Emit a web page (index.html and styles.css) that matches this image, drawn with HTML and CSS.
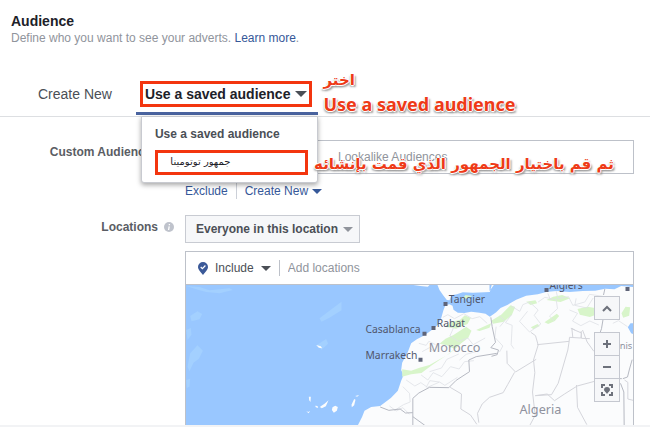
FILE: index.html
```html
<!DOCTYPE html>
<html lang="en">
<head>
<meta charset="utf-8">
<title>Audience</title>
<link rel="stylesheet" href="styles.css">
</head>
<body>
<header class="intro">
  <h1>Audience</h1>
  <p>Define who you want to see your adverts. <a href="#">Learn more</a>.</p>
</header>
<nav class="tabs">
  <button class="tab" type="button">Create New</button>
  <div class="tab-wrap">
    <button class="tab active" type="button"><span class="marked">Use a saved audience <i class="caret"></i></span></button>
    <div class="menu">
      <strong>Use a saved audience</strong>
      <button class="menu-item" type="button" lang="ar" dir="rtl">جمهور توتومينا</button>
    </div>
  </div>
  <div class="note">
    <span class="note-ar" lang="ar" dir="rtl">اختر</span>
    <span>Use a saved audience</span>
  </div>
</nav>
<main class="form">
  <div class="label custom-label"><label for="custom">Custom Audiences</label>
    <svg class="info" viewBox="0 0 10 10" aria-hidden="true"><circle cx="5" cy="5" r="5" fill="#bfc3cc"/><path d="M5.4 2v1.2M5.2 4.4 4.6 8" stroke="#fff" stroke-width="1.3"/></svg>
  </div>
  <div class="field">
    <div class="custom-box">
      <input id="custom" type="text" placeholder="Lookalike Audiences">
      <p class="note note-ar note-second" lang="ar" dir="rtl">ثم قم باختيار الجمهور الذي قمت بإنشائه</p>
    </div>
    <div class="links"><a href="#">Exclude</a><a class="create" href="#">Create New <i class="caret small"></i></a></div>
  </div>
  <div class="label loc-label">Locations
    <svg class="info" viewBox="0 0 10 10" aria-hidden="true"><circle cx="5" cy="5" r="5" fill="#bfc3cc"/><path d="M5.4 2v1.2M5.2 4.4 4.6 8" stroke="#fff" stroke-width="1.3"/></svg>
  </div>
  <div class="field">
    <button class="scope" type="button">Everyone in this location <i class="caret small"></i></button>
    <div class="locations">
      <div class="loc-bar">
        <button class="include" type="button">
          <svg class="pin" viewBox="0 0 10 13" aria-hidden="true"><path d="M5 0a5 5 0 0 1 5 5c0 3-3 5-5 8C3 10 0 8 0 5a5 5 0 0 1 5-5z" fill="#3b5998"/><path d="m2.7 5 1.7 1.7 3-3.2" fill="none" stroke="#fff" stroke-width="1.2"/></svg>
          Include <i class="caret small"></i>
        </button>
        <input type="text" placeholder="Add locations" aria-label="Add locations">
      </div>
      <div class="map">
        <svg class="map-art" viewBox="-432 15 1344 420" preserveAspectRatio="xMidYMid slice" role="img" aria-label="Map of Morocco and Algeria">
          <rect x="-1000" y="-500" width="3000" height="1500" fill="#99c7ff"/>
          <g fill="#a3d0ff">
            <path d="M-430 18l40 3 30 10 60-6 10 5-40 10-40-4-30-8zM-418 108l22-14 14 8-8 16-24 6zM-430 150l14-6 2 20-12 16zM-426 260l8-40 22-24 16 16-12 24-16 12-12 26zM-430 300l12-4-2 24-8 4zM-30 115l40-30 26-20v26l-36 22-24 12z"/>
            <path d="M-38 195l28-18 6 14-20 18z"/>
          </g>
          <g fill="#fbfcfd">
            <path d="M85 436 98 410 105 392 125 381 152 378 184 354 205 332 215 302 222 286 215 270 218 248 235 216 245 190 262 178 285 166 308 149 325 135 335 115 342 90 348 75 360 73 369 77 372 89 385 98 405 99 425 95 450 98 468 101 481 110 500 97 513 84 535 74 560 59 590 47 625 43 650 36 680 33 720 36 760 33 797 32 827 26 855 28 875 18 912 21 930 24V128L903 130 895 142 905 160 930 170V450H80z"/>
            <path d="M322 10 330 30 341 46 352 60 360 61 366 46 382 43 400 37 430 38 481 36 488 10zM245 14l28 4 22 2 6-6zM480 15h13l-7 10-6 8z"/>
            <path d="M-40 195l14 4 4 6-10-2zM-62 350l6 0-1 16-4-5zM-25 378l10-7 12-10-8 18-12 6-6-4zM9 382l8-5 8 4-3 11-9 6-6-8zM-43 377l7 1 2 6-7-2zM-70 393l6 3 6-3-5 7zM66 374l8-17 4 2-4 17-7 6zM77 348l12-3-6 5z"/>
          </g>
          <g fill="#d8f5ca">
            <path d="M218 268 245 272 270 263 300 255 325 241 350 227 375 207 352 196 330 191 348 176 372 165 395 150 410 140 426 152 416 174 395 190 377 207 358 222 330 240 307 256 276 279 245 283 218 290zM345 140l22-15 25-6 14-13 18 8-10 18-34 14zM440 150l45-20-5 13-30 10zM398 56l10-11 20 3-10 7z"/>
            <path d="M485 122l30-18 28-28 14 5-10 24-24 20-32 6zM590 65l28-4 5 9-20 5zM651 60l20-10 27-5 24 10-29 11zM744 87l29-7 24 4 2 20-18 7-30-7zM645 127l37-26 7 7-13 15-20 9zM604 142l20-10 7 6-19 10zM876 100l12-20 14 2-3 25-18 6z"/>
          </g>
          <g fill="none" stroke="#e0e2e7" stroke-width="2.5" stroke-linejoin="round">
            <path d="M340 112l15-8 20 12 28-15 25 15 23-6 22 20M355 126l16 20-10 22 26 16 28-10 16 20 36-20M268 190l22 6 8-12 20 10M278 215l22-12 12 10M220 320l20 20 2 26-20 8-28 18M230 300l26 18 18-10 20 14 36-16 16 10 38-24M275 285l20 15 16-22 26 12 26-30 26 7 16-22 28-3M300 275l36-11 16-26 36-16M390 240l20-17 36-10M290 322l11-20 28 4M180 378l20 15 20-10 20 20"/>
            <path d="M510 108l16 14-15 18M545 78l26 16 9-20 20-8 26 24-12 16 20 26-34 24-30-32 24-30M546 104l-18 24 20 8-3 58 8 12M500 140l-4 32 24 26-10 18M626 66l20-14 34 7 4 27-24 22 14 15M655 40l8 20M680 33l5 23 32-6 13 26 36-10 14-23 40 6M720 90l24 10-15 23 25 14 27-14 27 12M740 55l-4 21 36 8 19-30M824 80l18-22 18 11M850 130l17-8 27 18"/>
          </g>
          <g fill="none" stroke="#d4d5db" stroke-width="3" stroke-linejoin="round">
            <path d="M532 212l1 38 25 26 62-38M612 240l14-45-8-28-14-10M623 194l96-10 1-12 34 2 2-15-32-14M719 184l-4 26-29 100-20 34-48 3M612 240l4 38-7 58 8 70-16 30M555 277l-20 36-14 25-41 14M617 347l36-5 22 20 30-20 38-24 52-14M736 150l-9-5 3 28M755 153l1 22 25 1M759 150l14 36 20 28M741 315l3 67 28 52M480 352l-22 20-14 28 4 28M362 322l34 20-2 45 29 18 19 28M885 300l10 7v50l20 5"/>
          </g>
          <g fill="none" stroke="#b6b9c2" stroke-width="3" stroke-linejoin="round">
            <path d="M152 381l26 10 34-4 16 12 22-1M250 436v-81l18-16 32-17 58 1 22-22 40-26-2-35 22-10 62-10M250 410l36 26M484 112l4 28 10 47-14 16 23 7-4 14-17 5M822 45l4-18M808 205l-4-25 12-34 5-30M880 296l14-5 6-24 8-28M873 310l10 26 1 100M797 296h80"/>
          </g>
          <g fill="#5f6478"><path d="M342 66h12v12h-12zM306 138h12v12h-12zM279 155h12v12h-12zM267 233h12v12h-12zM645 24h12v12h-12zM888 21h12v12h-12z"/></g>
          <g class="city"><text x="358" y="70">Tangier</text><text x="322" y="141">Rabat</text><text x="108" y="158">Casablanca</text><text x="108" y="236">Marrakech</text><text x="660" y="27">Algiers</text></g>
          <g class="country"><text x="298" y="215">Morocco</text><text x="570" y="402">Algeria</text><text class="tunis" x="839" y="206">Tunis</text></g>
        </svg>
        <div class="controls">
          <button type="button" aria-label="Collapse map"><svg viewBox="0 0 24 22"><path d="m8 14 4-4 4 4"/></svg></button>
          <div class="zoom">
            <button type="button" aria-label="Zoom in"><svg viewBox="0 0 24 22"><path d="M8 11h8M12 7v8"/></svg></button>
            <button type="button" aria-label="Zoom out"><svg viewBox="0 0 24 22"><path d="M8 11h8"/></svg></button>
            <button type="button" aria-label="Drop pin"><svg viewBox="0 0 24 22"><path d="M7 9V6h3M14 6h3v3M17 13v3h-3M10 16H7v-3"/><path class="solid" d="M12 8a3 3 0 0 1 3 3c0 1-2 2-3 4-1-2-3-3-3-4a3 3 0 0 1 3-3z"/></svg></button>
          </div>
        </div>
      </div>
    </div>
  </div>
</main>
<footer class="strip"></footer>
</body>
</html>
```

FILE: styles.css
```css
* { box-sizing: border-box; }
body { margin: 0; background: #fff; color: #4b4f56; font: 12px/16px "Liberation Sans", Arial, sans-serif; }
button, input { font: inherit; color: inherit; margin: 0; }
button { padding: 0; border: 0; background: none; }
a { color: #365899; text-decoration: none; }

.intro { padding: 13px 11px 0; }
h1 { margin: 0; font-size: 14px; line-height: 16px; color: #1d2129; }
.intro p { margin: 0; line-height: 18px; color: #90949c; }

.tabs { display: flex; margin-top: 24px; padding-left: 14px; height: 46px; border-bottom: 1px solid #dddfe2; }
.tab { height: 44px; padding: 2px 24px 0; font-size: 14px; }
.tab-wrap { position: relative; margin-right: 5px; }
.tab.active { padding: 4px 6px 0 4px; border-bottom: 3px solid #4a64a0; font-weight: bold; color: #1d2129; }
.marked { display: flex; align-items: center; gap: 5px; height: 26px; padding: 0 2px; border: 3px solid #f3350f; white-space: nowrap; }
.caret { display: inline-block; border: 6px solid transparent; border-top-color: #4b4f56; border-bottom: 0; }
.caret.small { border-width: 5px; border-bottom: 0; }

.menu { position: absolute; z-index: 2; top: 45px; left: 5px; right: 0; padding: 9px 9px 7px 13px; background: #fff; border: 1px solid #c8cad0; border-radius: 0 0 3px 3px; box-shadow: 0 2px 5px rgba(0, 0, 0, .35); }
.menu strong { display: block; }
.menu-item { display: block; width: 100%; height: 25px; margin-top: 8px; padding: 0 75px 2px 0; border: 3px solid #f3350f; font: 10px/14px "DejaVu Sans", sans-serif; color: #1d2129; white-space: nowrap; text-align: right; }

.note { display: flex; flex-direction: column; align-items: flex-start; margin-top: -3px; font: bold 18px/24px "Noto Sans", "DejaVu Sans", sans-serif; color: #ee3a17; white-space: nowrap; text-shadow: 1px 0 #fff, -1px 0 #fff, 0 1px #fff, 0 -1px #fff, 2px 2px 2px #999, -1px 2px 2px #aaa; }
.note-ar { font: bold 15px/24px "DejaVu Sans", sans-serif; }
.note-second { position: absolute; z-index: 3; right: 20px; top: 12px; margin: 0; }

.form { display: grid; grid-template-columns: 174px minmax(0, 1fr); column-gap: 11px; padding-right: 16px; }
.label { display: flex; justify-content: flex-end; align-items: center; gap: 6px; height: 24px; font-weight: bold; color: #5a5d64; }
.custom-label { margin-top: 23px; }
.info { width: 10px; height: 10px; }
.custom-box { position: relative; margin-top: 23px; }
.custom-box input { display: block; width: 100%; height: 34px; padding: 0 0 0 152px; border: 1px solid #bdc1c9; }
input { background: #fff; border-radius: 0; }
::placeholder { color: #90949c; opacity: 1; }
.links { display: flex; margin: 9px 0 16px; }
.links a + a { margin-left: 8px; padding-left: 8px; border-left: 1px solid #ccd0d8; }
.create { display: flex; align-items: center; gap: 4px; }
.create .caret { border-top-color: #365899; }
.scope { display: flex; align-items: center; gap: 5px; height: 28px; padding: 0 6px 0 10px; border: 1px solid #c8cbd2; background: #f6f7f9; font-weight: bold; }
.scope .caret { border-top-color: #90949c; }
.locations { margin-top: 8px; border: 1px solid #bdc1c9; border-bottom: 0; }
.loc-bar { display: flex; align-items: center; height: 33px; border-bottom: 1px solid #bdc1c9; }
.include { display: flex; align-items: center; padding-left: 12px; gap: 7px; }
.pin { width: 10px; height: 13px; }
.loc-bar input { flex: 1; min-width: 0; height: 16px; margin-left: 8px; padding: 0 0 0 8px; border: 0; border-left: 1px solid #bdc1c9; }

.map { position: relative; height: 140px; overflow: hidden; }
.map-art { display: block; width: 100%; height: 100%; }
.city { font: 31px "Noto Sans", sans-serif; fill: #50566c; }
.country { font: 38px "Noto Sans", sans-serif; fill: #8f929e; }
.country .tunis { font-size: 28px; }
.controls { position: absolute; top: 11px; right: 13px; display: grid; gap: 12px; }
.controls button { display: block; width: 26px; height: 24px; border: 1px solid #c5c8d0; background: #f6f7f9; }
.zoom button + button { margin-top: -1px; }
.controls svg { display: block; width: 24px; height: 22px; fill: none; stroke: #6d717b; stroke-width: 2; }
.controls .solid { fill: #6d717b; stroke: none; }
.strip { height: 2px; background: #f2f3f5; }
```
